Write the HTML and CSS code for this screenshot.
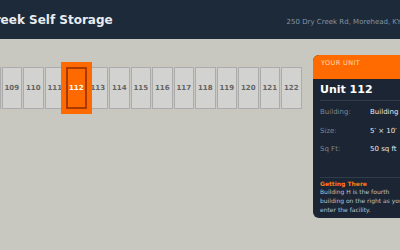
FILE: index.html
```html
<!DOCTYPE html>
<html>
<head>
<meta charset="utf-8">
<link rel="stylesheet" href="styles.css">
</head>
<body>
<header class="topbar">
  <h1 class="brand">Dry Creek Self Storage</h1>
  <div class="address">250 Dry Creek Rd, Morehead, KY</div>
</header>
<main class="map">
  <div class="units">
    <div class="unit">108</div>
    <div class="unit">109</div>
    <div class="unit">110</div>
    <div class="unit">111</div>
    <div class="unit selected">112</div>
    <div class="unit">113</div>
    <div class="unit">114</div>
    <div class="unit">115</div>
    <div class="unit">116</div>
    <div class="unit">117</div>
    <div class="unit">118</div>
    <div class="unit">119</div>
    <div class="unit">120</div>
    <div class="unit">121</div>
    <div class="unit">122</div>
  </div>
  <aside class="card">
    <div class="card-head">YOUR UNIT</div>
    <div class="card-body">
      <div class="card-title">Unit 112</div>
      <div class="facts">
        <div class="fact"><span class="label">Building:</span><span class="value">Building H</span></div>
        <div class="fact"><span class="label">Size:</span><span class="value">5′ × 10′</span></div>
        <div class="fact"><span class="label">Sq Ft:</span><span class="value">50 sq ft</span></div>
      </div>
      <div class="directions">
        <div class="dir-title">Getting There</div>
        <p class="dir-text">Building H is the fourth building on the right as you enter the facility.</p>
      </div>
    </div>
  </aside>
</main>
</body>
</html>
```
FILE: styles.css
```css
html, body {
  margin: 0;
  padding: 0;
}
body {
  width: 400px;
  height: 250px;
  overflow: hidden;
  background: #c8c8c0;
  font-family: "DejaVu Sans", Verdana, sans-serif;
}
.topbar {
  height: 39px;
  background: #1c2a3a;
  display: flex;
  justify-content: space-between;
  align-items: baseline;
  padding-top: 13px;
  box-sizing: border-box;
}
.brand {
  margin: 0 0 0 -42px;
  font-size: 12px;
  font-weight: bold;
  color: #e8ecf0;
  white-space: nowrap;
}
.address {
  margin-right: -1px;
  font-size: 7px;
  color: #8593a3;
  white-space: nowrap;
}
.map {
  position: relative;
  height: 211px;
}
.units {
  display: flex;
  gap: 1px;
  padding-top: 28px;
  margin-left: -20px;
}
.unit {
  position: relative;
  flex: 0 0 auto;
  width: 20.5px;
  height: 42px;
  box-sizing: border-box;
  border: 1px solid #ababab;
  background: #d2d2d0;
  display: flex;
  align-items: center;
  justify-content: center;
  font-size: 7px;
  font-weight: bold;
  color: #646464;
}
.unit.selected {
  z-index: 2;
  background: #ff6a00;
  border: 2px solid #a83a00;
  box-shadow: 0 0 0 5px #ff6a00;
  color: #ffffff;
}
.card {
  position: absolute;
  top: 16px;
  left: 313px;
  width: 104px;
  border-radius: 6px;
  overflow: hidden;
  background: #1b2533;
}
.card-head {
  height: 24px;
  box-sizing: border-box;
  background: #ff6b00;
  padding: 4px 0 0 8px;
  font-size: 6.5px;
  letter-spacing: 0.4px;
  color: #ffd9b8;
  line-height: 8px;
}
.card-body {
  padding: 4px 7px 4px 7px;
}
.card-title {
  font-size: 11px;
  font-weight: bold;
  color: #ffffff;
  line-height: 13px;
  padding-bottom: 4px;
  border-bottom: 1px solid #2e3c4b;
}
.facts {
  padding-top: 2px;
  padding-bottom: 18px;
  border-bottom: 1px solid #2e3c4b;
}
.fact {
  display: grid;
  grid-template-columns: 50px 1fr;
  height: 18.5px;
  align-items: center;
  white-space: nowrap;
}
.label {
  font-size: 7px;
  color: #7b8795;
}
.value {
  font-size: 7px;
  color: #e6e8ea;
}
.directions {
  padding-top: 2px;
}
.dir-title {
  font-size: 6px;
  font-weight: bold;
  color: #ff7a1a;
  line-height: 8.7px;
}
.dir-text {
  margin: 0;
  font-size: 6px;
  line-height: 8.7px;
  color: #bcc3ca;
}
```
